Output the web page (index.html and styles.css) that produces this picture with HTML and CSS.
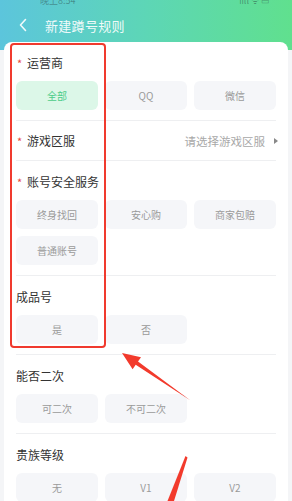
FILE: index.html
```html
<!DOCTYPE html>
<html lang="zh">
<head>
<meta charset="utf-8">
<link rel="stylesheet" href="styles.css">
</head>
<body>
<div class="page">
  <header class="header">
    <div class="status"><span class="status-time">晚上8:54</span><span class="status-icons">ııll ᯤ ▭</span></div>
    <div class="titlebar">
      <svg class="back" width="10" height="14" viewBox="0 0 10 14"><path d="M7.5 1.5 L2.5 7 L7.5 12.5" fill="none" stroke="#ffffff" stroke-width="1.6" stroke-linecap="round" stroke-linejoin="round" opacity="0.9"/></svg>
      <span class="title">新建蹲号规则</span>
    </div>
  </header>

  <main class="card">
    <section class="section">
      <div class="label"><span class="req">*</span>运营商</div>
      <div class="options">
        <div class="opt active">全部</div>
        <div class="opt">QQ</div>
        <div class="opt">微信</div>
      </div>
    </section>

    <section class="section row">
      <div class="label"><span class="req">*</span>游戏区服</div>
      <div class="picker">请选择游戏区服<span class="caret"></span></div>
    </section>

    <section class="section">
      <div class="label"><span class="req">*</span>账号安全服务</div>
      <div class="options">
        <div class="opt">终身找回</div>
        <div class="opt">安心购</div>
        <div class="opt">商家包赔</div>
        <div class="opt">普通账号</div>
      </div>
    </section>

    <section class="section">
      <div class="label">成品号</div>
      <div class="options">
        <div class="opt">是</div>
        <div class="opt">否</div>
      </div>
    </section>

    <section class="section">
      <div class="label">能否二次</div>
      <div class="options">
        <div class="opt">可二次</div>
        <div class="opt">不可二次</div>
      </div>
    </section>

    <section class="section last">
      <div class="label">贵族等级</div>
      <div class="options">
        <div class="opt">无</div>
        <div class="opt">V1</div>
        <div class="opt">V2</div>
      </div>
    </section>
  </main>

  <div class="highlight"></div>
  <svg class="arrows" width="292" height="501" viewBox="0 0 292 501">
    <polygon points="122,353 141,357.2 138,361.6 190.5,400.5 135.7,364.8 132.6,369.2" fill="#f23a2c"/>
    <polygon points="185.5,456 187.5,457.5 174,501 167.5,501" fill="#f23a2c"/>
  </svg>
</div>
</body>
</html>
```

FILE: styles.css
```css
* { box-sizing: border-box; }
html, body {
  margin: 0;
  padding: 0;
  width: 292px;
  height: 501px;
  overflow: hidden;
  background: #f4f5f7;
  font-family: "Noto Sans CJK SC", "Noto Sans", sans-serif;
}
.page {
  position: relative;
  width: 292px;
  height: 501px;
  overflow: hidden;
}
.header {
  height: 50px;
  background: linear-gradient(90deg, #5cc5dc 0%, #5dd6b6 50%, #60e08e 100%);
  margin-bottom: -8px;
}
.status {
  height: 10px;
  overflow: hidden;
  display: flex;
  justify-content: space-between;
  padding: 0 22px 0 40px;
  color: rgba(40, 60, 60, 0.45);
  font-size: 9px;
  line-height: 10px;
}
.status-time, .status-icons { margin-top: -4px; }
.titlebar {
  height: 30px;
  display: flex;
  align-items: center;
  padding-left: 18px;
  gap: 17px;
}
.back { display: block; }
.title {
  color: rgba(255, 255, 255, 0.92);
  font-size: 13px;
  letter-spacing: 0.3px;
}
.card {
  margin: 0 4px;
  background: #ffffff;
  border-radius: 8px 8px 0 0;
  padding: 0 12px;
  height: 470px;
}
.section {
  padding: 13px 0 10px;
  border-bottom: 1px solid #eeeff1;
}
.section.last { border-bottom: none; }
.section.row {
  height: 40px;
  padding: 0;
  display: flex;
  align-items: center;
  justify-content: space-between;
}
.label {
  font-size: 12px;
  line-height: 16px;
  color: #333333;
  display: flex;
  align-items: center;
}
.req {
  color: #e8483c;
  font-size: 11px;
  width: 10px;
  margin-left: 1px;
}
.options {
  margin-top: 10px;
  display: grid;
  grid-template-columns: repeat(3, 82px);
  column-gap: 7px;
  row-gap: 7px;
}
.opt {
  height: 29px;
  border-radius: 6px;
  background: #f5f6f9;
  color: #9a9a9a;
  font-size: 10px;
  display: flex;
  align-items: center;
  justify-content: center;
}
.opt.active {
  background: #dcf7e8;
  color: #4ccc88;
}
.picker {
  font-size: 11.5px;
  color: #a8a8a8;
  display: flex;
  align-items: center;
  margin-right: -2px;
}
.caret {
  margin-left: 9px;
  width: 0;
  height: 0;
  border-top: 3px solid transparent;
  border-bottom: 3px solid transparent;
  border-left: 4px solid #888888;
}
.highlight {
  position: absolute;
  left: 10px;
  top: 43px;
  width: 96px;
  height: 305px;
  border: 2px solid #f03a2e;
  border-radius: 4px;
}
.arrows {
  position: absolute;
  left: 0;
  top: 0;
}
```
